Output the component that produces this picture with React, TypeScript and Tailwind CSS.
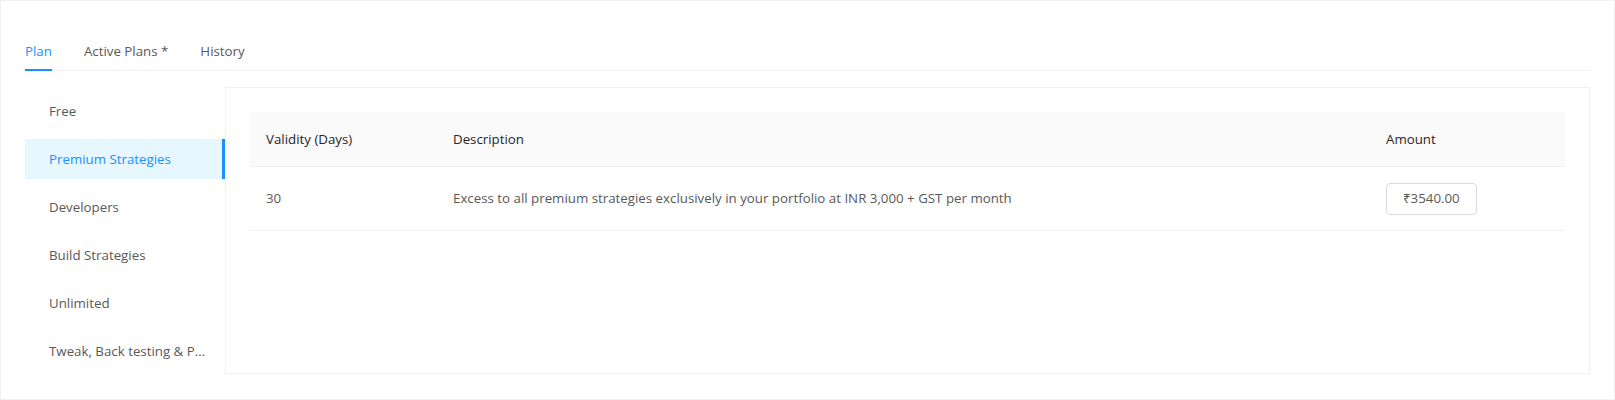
import { useState } from 'react';

const plans = [
  'Free',
  'Premium Strategies',
  'Developers',
  'Build Strategies',
  'Unlimited',
  'Tweak, Back testing & Paper Trading',
];

const tabs = ['Plan', 'Active Plans *', 'History'];

const App = () => {
  const [tab, setTab] = useState('Plan');
  const [plan, setPlan] = useState('Premium Strategies');

  return (
    <div
      className="h-[400px] w-full border border-[#f0f0f0] bg-white px-6 text-[13.3px] text-[#595959]"
      style={{ fontFamily: '"Open Sans", "Noto Sans", sans-serif' }}
    >
      <div className="flex h-[70px] items-end gap-8 border-b border-[#f0f0f0]">
        {tabs.map((t) => (
          <button
            key={t}
            onClick={() => setTab(t)}
            className={`relative pb-[8px] leading-[22px] ${tab === t ? 'text-[#1890ff]' : 'text-[#595959]'}`}
          >
            {t}
            {tab === t && <span className="absolute -bottom-px left-0 h-[2px] w-full bg-[#1890ff]" />}
          </button>
        ))}
      </div>

      <div className="mt-4 flex">
        <ul className="w-[200px] shrink-0">
          {plans.map((p) => (
            <li
              key={p}
              onClick={() => setPlan(p)}
              className={`relative mt-1 mb-2 h-10 cursor-pointer truncate pr-4 pl-6 leading-10 ${
                plan === p ? 'bg-[#e6f7ff] text-[#1890ff]' : ''
              }`}
            >
              {p}
              {plan === p && <span className="absolute top-0 right-0 h-full w-[3px] bg-[#1890ff]" />}
            </li>
          ))}
        </ul>

        <div className="h-[287px] flex-1 border border-[#f0f0f0] p-6">
          <table className="w-full table-fixed border-collapse text-left">
            <colgroup>
              <col className="w-[187px]" />
              <col />
              <col className="w-[195px]" />
            </colgroup>
            <thead>
              <tr className="border-b border-[#f0f0f0] bg-[#fafafa] text-[#262626]">
                <th className="p-4 font-normal leading-[22px]">Validity (Days)</th>
                <th className="p-4 font-normal leading-[22px]">Description</th>
                <th className="p-4 font-normal leading-[22px]">Amount</th>
              </tr>
            </thead>
            <tbody>
              <tr className="border-b border-[#f0f0f0]">
                <td className="h-16 px-4 py-0">30</td>
                <td className="px-4 py-0">
                  Excess to all premium strategies exclusively in your portfolio at INR 3,000 + GST per month
                </td>
                <td className="px-4 py-0">
                  <button className="h-8 rounded-sm border border-[#d9d9d9] px-[16px] text-[#595959]">
                    ₹3540.00
                  </button>
                </td>
              </tr>
            </tbody>
          </table>
        </div>
      </div>
    </div>
  );
};

export default App;
